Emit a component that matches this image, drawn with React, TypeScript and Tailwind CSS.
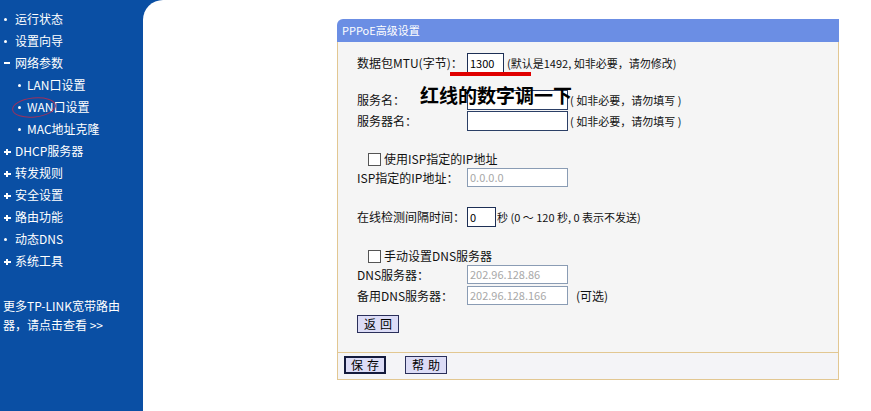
import React from 'react';

const FONT = { fontFamily: '"Noto Sans CJK SC", "Liberation Sans", sans-serif' };

type NavItem = { label: string; mark: 'dot' | 'plus' | 'minus'; sub?: boolean };

const NAV: NavItem[] = [
  { label: '运行状态', mark: 'dot' },
  { label: '设置向导', mark: 'dot' },
  { label: '网络参数', mark: 'minus' },
  { label: 'LAN口设置', mark: 'dot', sub: true },
  { label: 'WAN口设置', mark: 'dot', sub: true },
  { label: 'MAC地址克隆', mark: 'dot', sub: true },
  { label: 'DHCP服务器', mark: 'plus' },
  { label: '转发规则', mark: 'plus' },
  { label: '安全设置', mark: 'plus' },
  { label: '路由功能', mark: 'plus' },
  { label: '动态DNS', mark: 'dot' },
  { label: '系统工具', mark: 'plus' },
];

function Mark({ kind }: { kind: NavItem['mark'] }) {
  if (kind === 'plus')
    return (
      <span className="relative inline-block w-[7px] h-[7px]">
        <span className="absolute left-0 top-[3px] w-[7px] h-[2px] bg-white" />
        <span className="absolute left-[2px] top-[1px] w-[2px] h-[6px] bg-white" />
      </span>
    );
  if (kind === 'minus') return <span className="inline-block w-[6px] h-[2px] bg-white" />;
  return <span className="inline-block w-[3px] h-[3px] bg-white rounded-full" />;
}

function Sidebar() {
  return (
    <div className="relative w-[143px] shrink-0 pt-[8px] text-white text-[12px]">
      {NAV.map((n) => (
        <div key={n.label} className={`flex items-center h-[22px] ${n.sub ? 'pl-[18px]' : 'pl-[4px]'}`}>
          <span className={`${n.sub ? 'w-[9px]' : 'w-[11px]'} flex items-center`}>
            <Mark kind={n.mark} />
          </span>
          <span className="leading-none">{n.label}</span>
        </div>
      ))}
      <div className="mt-[24px] pl-[3px] leading-[19px] text-[12px]">
        <div>更多TP-LINK宽带路由</div>
        <div>器，请点击查看 &gt;&gt;</div>
      </div>
      <svg className="absolute left-[11px] top-[96px]" width="48" height="23" viewBox="0 0 48 23">
        <ellipse cx="23" cy="11.5" rx="21.5" ry="9.5" fill="none" stroke="#a0305a" strokeWidth="1" transform="rotate(-6 23 11.5)" />
      </svg>
    </div>
  );
}

function Input({ w, value, dim, dark }: { w: string; value?: string; dim?: boolean; dark?: boolean }) {
  return (
    <div
      className={`${w} h-full bg-white border flex items-center px-[2px] text-[11px] ${
        dim ? 'border-[#8a9cb4] text-[#a8a8a8]' : dark ? 'border-[#1d2f55] text-black' : 'border-[#2b3f66] text-black'
      }`}
    >
      {value}
    </div>
  );
}

function Btn({ label, strong }: { label: string; strong?: boolean }) {
  return (
    <div
      className={`w-[42px] h-[18px] flex items-center justify-center bg-[#dcdcf6] text-[12px] text-black tracking-[4px] pl-[4px] ${
        strong ? 'border-2 border-[#141a3c]' : 'border border-[#2a2f5a]'
      }`}
    >
      {label}
    </div>
  );
}

function Check() {
  return <span className="inline-block w-[13px] h-[13px] bg-white border border-[#555]" />;
}

function Row({ label, h, className = '', children }: { label?: string; h: string; className?: string; children?: React.ReactNode }) {
  return (
    <div className={`flex items-stretch ${h} ${className}`}>
      <div className="w-[110px] flex items-center">{label}</div>
      {children}
    </div>
  );
}

function Panel() {
  return (
    <div className="relative w-[502px] text-[12px] text-[#111]">
      <div className="h-[23px] bg-[#6b8ee4] rounded-tl-[6px] flex items-center pl-[5px] text-white text-[11px]">
        PPPoE高级设置
      </div>
      <div className="bg-[#f5f5f5] border-x border-[#e2c792] pl-[19px] pt-[11px] pb-[19px]">
        <Row label="数据包MTU(字节)：" h="h-[20px]">
          <Input w="w-[37px]" value="1300" dark />
          <span className="flex items-center pl-[3px] text-[11px]">(默认是1492, 如非必要，请勿修改)</span>
        </Row>
        <Row label="服务名：" h="h-[20px]" className="mt-[17px]">
          <Input w="w-[101px]" />
          <span className="flex items-center pl-[2px] text-[11px]">( 如非必要，请勿填写 )</span>
        </Row>
        <Row label="服务器名：" h="h-[20px]" className="mt-[1px]">
          <Input w="w-[101px]" />
          <span className="flex items-center pl-[2px] text-[11px]">( 如非必要，请勿填写 )</span>
        </Row>
        <div className="mt-[19px] h-[18px] flex items-center pl-[11px] gap-[3px]">
          <Check />
          <span>使用ISP指定的IP地址</span>
        </div>
        <Row label="ISP指定的IP地址：" h="h-[19px]">
          <Input w="w-[101px]" value="0.0.0.0" dim />
        </Row>
        <Row label="在线检测间隔时间：" h="h-[20px]" className="mt-[20px]">
          <Input w="w-[29px]" value="0" dark />
          <span className="flex items-center pl-[1px] text-[11px]">秒 (0 ～ 120 秒, 0 表示不发送)</span>
        </Row>
        <div className="mt-[20px] h-[18px] flex items-center pl-[11px] gap-[3px]">
          <Check />
          <span>手动设置DNS服务器</span>
        </div>
        <Row label="DNS服务器：" h="h-[19px]">
          <Input w="w-[101px]" value="202.96.128.86" dim />
        </Row>
        <Row label="备用DNS服务器：" h="h-[19px]" className="mt-[2px]">
          <Input w="w-[101px]" value="202.96.128.166" dim />
          <span className="flex items-center pl-[8px]">(可选)</span>
        </Row>
        <div className="mt-[10px]">
          <Btn label="返回" />
        </div>
      </div>
      <div className="bg-[#f4f4f7] border border-[#e2c792] h-[28px] pl-[6px] pt-[3px] flex gap-[19px] items-start">
        <Btn label="保存" strong />
        <Btn label="帮助" />
      </div>

      {/* annotation overlays */}
      <div className="absolute left-[113px] top-[53px] w-[81px] h-[4px] bg-[#e00000]" />
      <div className="absolute left-[83px] top-[64px] text-[19px] font-bold text-black leading-[24px] whitespace-nowrap">
        红线的数字调一下
      </div>
    </div>
  );
}

export default function App() {
  return (
    <div className="w-[871px] h-[411px] flex bg-[#0a4fa4] overflow-hidden" style={FONT}>
      <Sidebar />
      <div className="flex-1 bg-white rounded-tl-[20px] pl-[194px] pt-[19px]">
        <Panel />
      </div>
    </div>
  );
}
